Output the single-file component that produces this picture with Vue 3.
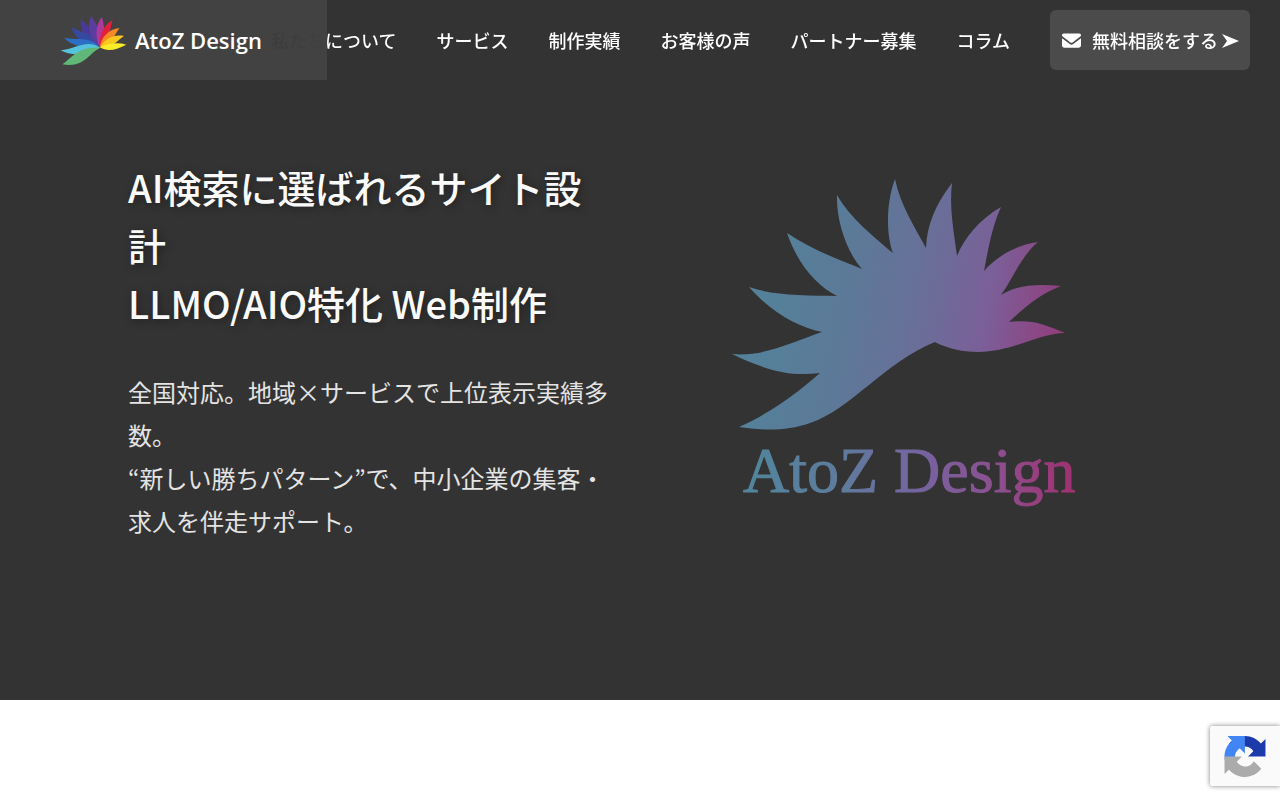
<script setup>
const links = ['サービス', '制作実績', 'お客様の声', 'パートナー募集', 'コラム']
const petals = [
  { color: '#4a3a97', d: 'M93 58C86 92 112 128 150 142C150 108 120 84 93 58Z' },
  { color: '#3549a0', d: 'M65 82C74 118 112 142 150 143C138 106 98 100 65 82Z' },
  { color: '#5a3d9c', d: 'M124 47C108 80 122 126 150 142C164 106 140 76 124 47Z' },
  { color: '#b0379b', d: 'M156 50C134 76 136 120 150 142C172 116 162 80 156 50Z' },
  { color: '#2c6fc4', d: 'M42 114C66 138 108 148 150 143C126 110 84 120 42 114Z' },
  { color: '#e3203a', d: 'M188 60C156 78 146 112 150 142C182 122 178 88 188 60Z' },
  { color: '#f58a25', d: 'M209 84C172 88 152 116 150 142C188 134 192 104 209 84Z' },
  { color: '#f7c81e', d: 'M222 108C188 102 162 120 150 142C186 146 204 120 222 108Z' },
  { color: '#fbec28', d: 'M229 134C204 126 176 130 150 142C174 158 202 148 229 134Z' },
  { color: '#56c3dc', d: 'M32 151C62 168 110 168 150 143C110 116 76 148 32 151Z' },
  { color: '#5fb878', d: 'M37 193C64 176 82 140 150 143C116 160 104 204 37 193Z' }
]
</script>

<template>
  <header class="header">
    <a class="brand" href="#">
      <svg class="brand-mark" viewBox="30 42 201 156" aria-hidden="true">
        <path v-for="p in petals" :key="p.color" :d="p.d" :fill="p.color" />
      </svg>
      <span class="brand-name">AtoZ Design</span>
    </a>
    <nav class="nav">
      <a class="link about" href="#">私たちについて</a>
      <a v-for="l in links" :key="l" class="link" href="#">{{ l }}</a>
      <a class="cta" href="#">
        <svg class="mail" viewBox="0 0 512 512" aria-hidden="true">
          <path d="M48 64C21.500 64 0 85.500 0 112c0 15.100 7.100 29.300 19.200 38.400L236.800 313.600c11.400 8.500 27 8.500 38.400 0L492.800 150.400c12.100-9.100 19.200-23.300 19.200-38.400c0-26.500-21.500-48-48-48H48zM0 196V384c0 35.300 28.700 64 64 64H448c35.300 0 64-28.700 64-64V196L294.400 359.200c-22.800 17.100-54 17.100-76.800 0L0 196z" />
        </svg>
        <span>無料相談をする</span>
        <svg class="arrow" viewBox="0 0 18 16" aria-hidden="true"><path d="M0 2L17 9L0 16L5 9Z" /></svg>
      </a>
    </nav>
  </header>

  <main class="hero">
    <div class="copy">
      <h1>AI検索に選ばれるサイト設計<br>LLMO/AIO特化 Web制作</h1>
      <p>全国対応。地域×サービスで上位表示実績多数。<br>“新しい勝ちパターン”で、中小企業の集客・求人を伴走サポート。</p>
    </div>
    <svg class="emblem" viewBox="727 175 370 350" role="img" aria-label="AtoZ Design">
      <defs>
        <linearGradient id="wing" gradientUnits="userSpaceOnUse" x1="740" y1="290" x2="1065" y2="345">
          <stop offset="0" stop-color="#52839b" />
          <stop offset="0.3" stop-color="#5b7a98" />
          <stop offset="0.55" stop-color="#696f99" />
          <stop offset="0.75" stop-color="#7b5f98" />
          <stop offset="1" stop-color="#943a7a" />
        </linearGradient>
        <linearGradient id="word" gradientUnits="userSpaceOnUse" x1="743" y1="0" x2="1077" y2="0">
          <stop offset="0" stop-color="#50869c" />
          <stop offset="0.3" stop-color="#5f7b9d" />
          <stop offset="0.52" stop-color="#7465a0" />
          <stop offset="0.75" stop-color="#8c5090" />
          <stop offset="1" stop-color="#a0306f" />
        </linearGradient>
      </defs>
      <path fill="url(#wing)" d="M739 427C770 413 795 395 820 373C790 377 765 370 732 354C763 357 790 343 822 332C798 327 772 313 749 287C775 296 805 295 837 296C815 285 797 262 787 233C812 250 838 259 862 269C848 254 836 222 837 195C850 218 875 238 893 253C886 235 886 203 895 179C900 204 914 226 926 248C927 225 935 205 952 183C949 208 954 232 957 256C964 238 980 219 1001 207C992 227 988 250 984 271C995 258 1015 245 1038 242C1022 255 1013 278 1001 295C1018 284 1040 284 1061 286C1040 294 1025 307 1009 322C1030 319 1045 324 1065 333C1040 333 1015 351 978 352C962 352 946 348 935 342C885 362 850 410 810 423C785 432 760 430 739 427Z" />
      <text class="word" x="743" y="492" fill="url(#word)" stroke="url(#word)">AtoZ Design</text>
    </svg>
  </main>

  <aside class="badge" aria-label="reCAPTCHA">
    <svg viewBox="0 0 64 64" aria-hidden="true">
      <path fill="#1c3aa9" d="M64 31.955l-.033-1.37V4.687l-7.16 7.16C50.948 4.674 42.033.093 32.05.093c-10.389 0-19.622 4.96-25.458 12.64l11.736 11.86a15.55 15.55 0 0 1 4.754-5.334c2.05-1.6 4.952-2.906 8.968-2.906.485 0 .86.057 1.135.163 4.976.393 9.288 3.14 11.828 7.124l-8.307 8.307L64 31.953" />
      <path fill="#4285f4" d="M31.862.094l-1.37.033H4.594l7.16 7.16C4.58 13.147 0 22.06 0 32.046c0 10.389 4.96 19.622 12.64 25.458L24.5 45.768a15.55 15.55 0 0 1-5.334-4.754c-1.6-2.05-2.906-4.952-2.906-8.968 0-.485.057-.86.163-1.135.393-4.976 3.14-9.288 7.124-11.828l8.307 8.307L31.86.095" />
      <path fill="#ababab" d="M.001 32.045l.033 1.37v25.898l7.16-7.16c5.86 7.173 14.774 11.754 24.76 11.754 10.389 0 19.622-4.96 25.458-12.64l-11.736-11.86a15.55 15.55 0 0 1-4.754 5.334c-2.05 1.6-4.952 2.906-8.968 2.906-.485 0-.86-.057-1.135-.163-4.976-.393-9.288-3.14-11.828-7.124l8.307-8.307L0 32.047" />
    </svg>
  </aside>
</template>

<style>
body {
  background: #fff;
  font-family: "Noto Sans CJK JP", sans-serif;
}
</style>

<style scoped>
.header {
  position: fixed;
  top: 0;
  left: 0;
  right: 0;
  height: 80px;
  z-index: 2;
}
.brand {
  position: absolute;
  top: 0;
  left: 0;
  box-sizing: border-box;
  width: 327px;
  height: 80px;
  padding-left: 60px;
  display: flex;
  align-items: center;
  gap: 8px;
  background: #424242;
  color: #fff;
  text-decoration: none;
}
.brand-mark {
  width: 67px;
  height: 52px;
}
.brand-name {
  font: 600 22px/28px "Open Sans", sans-serif;
}
.nav {
  position: relative;
  height: 80px;
  padding-right: 30px;
  display: flex;
  align-items: center;
  justify-content: flex-end;
  gap: 40px;
  pointer-events: none;
}
.link,
.cta {
  pointer-events: auto;
  color: #fff;
  font-size: 18px;
  line-height: 28px;
  font-weight: 500;
  text-decoration: none;
  white-space: nowrap;
}
.about {
  color: transparent;
  background: linear-gradient(90deg, #3c3c3c 0, #414141 56px, #fff 56px);
  background-clip: text;
  -webkit-background-clip: text;
}
.cta {
  box-sizing: border-box;
  width: 200px;
  height: 60px;
  padding: 0 12px;
  display: flex;
  align-items: center;
  border-radius: 6px;
  background: #4b4b4b;
}
.cta svg {
  fill: #fff;
  flex: none;
}
.mail {
  width: 19px;
  height: 19px;
  margin-right: 11px;
}
.arrow {
  width: 18px;
  height: 16px;
  margin-left: 4px;
}
.hero {
  box-sizing: border-box;
  min-height: 700px;
  padding: 158px 10% 150px;
  display: grid;
  grid-template-columns: 1fr 1fr;
  gap: 64px;
  align-items: center;
  align-content: start;
  background: #333;
}
h1 {
  margin: 0 0 38px;
  color: #fafafa;
  font-size: 38px;
  line-height: 58px;
  font-weight: 500;
  text-shadow: 2px 2px 8px rgba(0, 0, 0, 0.4);
}
p {
  margin: 0;
  color: #e4e4e4;
  font-size: 24px;
  line-height: 43px;
  font-weight: 400;
}
.emblem {
  width: 370px;
  max-width: 100%;
  justify-self: center;
}
.word {
  font-family: "Liberation Serif", "Times New Roman", serif;
  font-size: 64px;
  stroke-width: 1px;
}
.badge {
  position: fixed;
  right: 0;
  bottom: 14px;
  box-sizing: border-box;
  width: 70px;
  height: 60px;
  padding: 10px 14px;
  border-radius: 2px 0 0 2px;
  background: #fafafa;
  box-shadow: 0 0 5px #808080;
}
.badge svg {
  display: block;
  width: 42px;
  height: 41px;
}
</style>
